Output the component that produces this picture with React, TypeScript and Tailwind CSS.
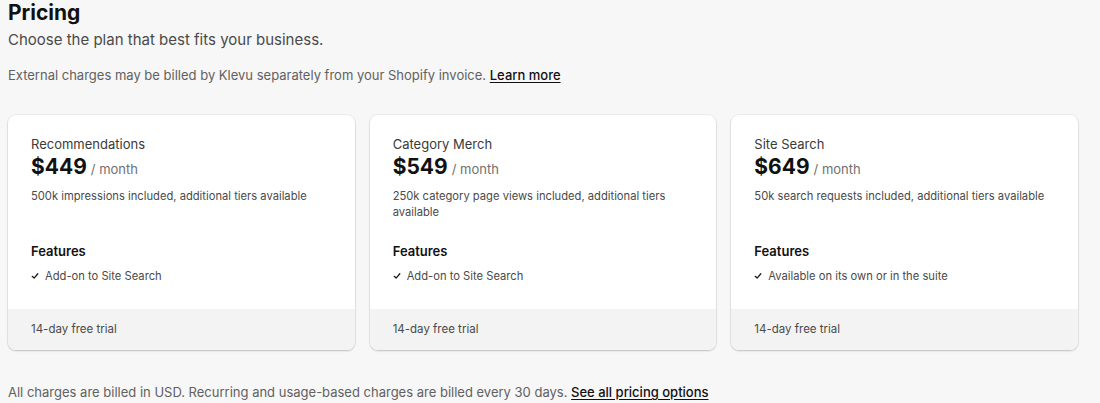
const plans = [
  {
    name: "Recommendations",
    price: "$449",
    desc: "500k impressions included, additional tiers available",
    feature: "Add-on to Site Search",
  },
  {
    name: "Category Merch",
    price: "$549",
    desc: "250k category page views included, additional tiers available",
    feature: "Add-on to Site Search",
  },
  {
    name: "Site Search",
    price: "$649",
    desc: "50k search requests included, additional tiers available",
    feature: "Available on its own or in the suite",
  },
];

function PlanCard({ plan }: { plan: (typeof plans)[number] }) {
  return (
    <div className="flex h-[235px] flex-col overflow-hidden rounded-[8px] bg-white shadow-[0_1px_2px_rgba(0,0,0,0.2),0_0_0_1px_rgba(0,0,0,0.04)]">
      <div className="flex-1 px-[23px] pt-[19px]">
        <p className="text-[13px] leading-5 text-[#3a3a3a]">{plan.name}</p>
        <p className="flex items-baseline gap-[4px] leading-[26px]">
          <span className="text-[21px] font-bold text-[#111]">{plan.price}</span>
          <span className="text-[13px] text-[#707070]">/ month</span>
        </p>
        <p className="mt-[6px] min-h-[32px] text-[11.2px] leading-4 text-[#4a4a4a]">{plan.desc}</p>
        <p className="mt-[21px] text-[13px] font-semibold leading-5 text-[#111]">Features</p>
        <p className="mt-[7px] flex items-center gap-[6px] text-[11.2px] leading-4 text-[#4a4a4a]">
          <svg width="8" height="8" viewBox="0 0 10 10" className="shrink-0">
            <path d="M1.5 5.4 L3.9 7.6 L8.5 2.2" fill="none" stroke="#1a1a1a" strokeWidth="1.6" strokeLinecap="round" strokeLinejoin="round" />
          </svg>
          {plan.feature}
        </p>
      </div>
      <div className="flex h-[41px] items-center bg-[#f3f3f3] px-[23px] text-[11.5px] text-[#4a4a4a]">
        14-day free trial
      </div>
    </div>
  );
}

export default function App() {
  return (
    <div
      className="min-h-[403px] bg-[#f7f7f7] pl-2 pr-[22px]"
      style={{ fontFamily: "Inter, 'Noto Sans', sans-serif" }}
    >
      <h1 className="text-[21px] font-bold leading-[26px] text-[#111]">Pricing</h1>
      <p className="mt-[2px] text-[15px] leading-6 text-[#4a4a4a]">
        Choose the plan that best fits your business.
      </p>
      <p className="mt-[13px] text-[13px] leading-5 text-[#616161]">
        External charges may be billed by Klevu separately from your Shopify invoice.{" "}
        <span className="font-medium text-[#111] underline underline-offset-2">Learn more</span>
      </p>
      <div className="mt-[30px] grid grid-cols-3 gap-[15px]">
        {plans.map((p) => (
          <PlanCard key={p.name} plan={p} />
        ))}
      </div>
      <p className="mt-8 text-[13px] leading-5 text-[#616161]">
        All charges are billed in USD. Recurring and usage-based charges are billed every 30 days.{" "}
        <span className="font-medium text-[#111] underline underline-offset-2">See all pricing options</span>
      </p>
    </div>
  );
}
